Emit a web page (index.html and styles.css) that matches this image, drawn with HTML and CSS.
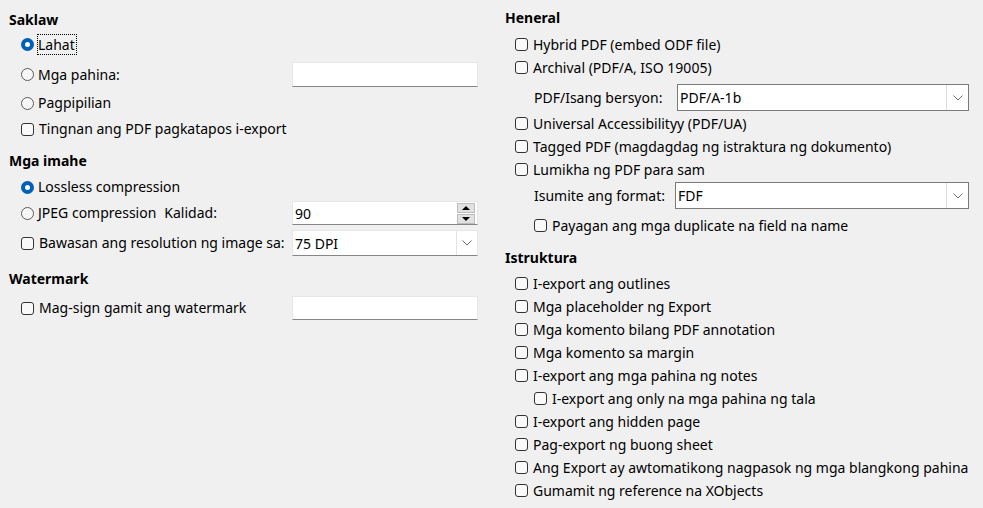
FILE: index.html
```html
<!DOCTYPE html>
<html>
<head>
<meta charset="utf-8">
<link rel="stylesheet" href="styles.css">
</head>
<body>
<div class="page">
  <div class="col left">
    <div class="heading h-saklaw">Saklaw</div>
    <div class="row r-lahat"><span class="radio on"></span><span class="lbl focus">Lahat</span></div>
    <div class="row r-pahina"><span class="radio"></span><span class="lbl grow">Mga pahina:</span><span class="field"></span></div>
    <div class="row r-pili"><span class="radio"></span><span class="lbl">Pagpipilian</span></div>
    <div class="row r-tingnan"><span class="check"></span><span class="lbl">Tingnan ang PDF pagkatapos i-export</span></div>

    <div class="heading h-imahe">Mga imahe</div>
    <div class="row r-lossless"><span class="radio on"></span><span class="lbl">Lossless compression</span></div>
    <div class="row r-jpeg"><span class="radio"></span><span class="lbl">JPEG compression</span><span class="lbl kalidad grow">Kalidad:</span>
      <span class="field spin"><span class="val">90</span><span class="spinbtns"><span class="sb up"></span><span class="sb down"></span></span></span>
    </div>
    <div class="row r-bawasan"><span class="check"></span><span class="lbl grow">Bawasan ang resolution ng image sa:</span>
      <span class="field combo"><span class="val">75 DPI</span><span class="drop"><svg width="10" height="6" viewBox="0 0 10 6"><path d="M0.5 0.5 L5 5 L9.5 0.5" fill="none" stroke="#707070" stroke-width="1"/></svg></span></span>
    </div>

    <div class="heading h-water">Watermark</div>
    <div class="row r-sign"><span class="check"></span><span class="lbl grow">Mag-sign gamit ang watermark</span><span class="field"></span></div>
  </div>

  <div class="col right">
    <div class="heading h-heneral">Heneral</div>
    <div class="row rr r-first"><span class="check"></span><span class="lbl">Hybrid PDF (embed ODF file)</span></div>
    <div class="row rr"><span class="check"></span><span class="lbl">Archival (PDF/A, ISO 19005)</span></div>
    <div class="row r-ver"><span class="lbl sub-lbl">PDF/Isang bersyon:</span>
      <span class="combo2 c-ver"><span class="val">PDF/A-1b</span><span class="drop2"><svg width="10" height="6" viewBox="0 0 10 6"><path d="M0.5 0.5 L5 5 L9.5 0.5" fill="none" stroke="#707070" stroke-width="1"/></svg></span></span>
    </div>
    <div class="row rr r-ua"><span class="check"></span><span class="lbl">Universal Accessibilityy (PDF/UA)</span></div>
    <div class="row rr"><span class="check"></span><span class="lbl">Tagged PDF (magdagdag ng istraktura ng dokumento)</span></div>
    <div class="row rr"><span class="check"></span><span class="lbl">Lumikha ng PDF para sam</span></div>
    <div class="row r-fmt"><span class="lbl sub-lbl">Isumite ang format:</span>
      <span class="combo2 c-fmt"><span class="val">FDF</span><span class="drop2"><svg width="10" height="6" viewBox="0 0 10 6"><path d="M0.5 0.5 L5 5 L9.5 0.5" fill="none" stroke="#707070" stroke-width="1"/></svg></span></span>
    </div>
    <div class="row rr r-payag indent"><span class="check"></span><span class="lbl">Payagan ang mga duplicate na field na name</span></div>

    <div class="heading h-istr">Istruktura</div>
    <div class="row rs r-sfirst"><span class="check"></span><span class="lbl">I-export ang outlines</span></div>
    <div class="row rs"><span class="check"></span><span class="lbl">Mga placeholder ng Export</span></div>
    <div class="row rs"><span class="check"></span><span class="lbl">Mga komento bilang PDF annotation</span></div>
    <div class="row rs"><span class="check"></span><span class="lbl">Mga komento sa margin</span></div>
    <div class="row rs"><span class="check"></span><span class="lbl">I-export ang mga pahina ng notes</span></div>
    <div class="row rs indent"><span class="check"></span><span class="lbl">I-export ang only na mga pahina ng tala</span></div>
    <div class="row rs"><span class="check"></span><span class="lbl">I-export ang hidden page</span></div>
    <div class="row rs"><span class="check"></span><span class="lbl">Pag-export ng buong sheet</span></div>
    <div class="row rs"><span class="check"></span><span class="lbl">Ang Export ay awtomatikong nagpasok ng mga blangkong pahina</span></div>
    <div class="row rs"><span class="check"></span><span class="lbl">Gumamit ng reference na XObjects</span></div>
  </div>
</div>
</body>
</html>
```

FILE: styles.css
```css
html, body {
  margin: 0;
  padding: 0;
  background: #f0f0f0;
}
body {
  font-family: "Noto Sans", "Open Sans", sans-serif;
  font-size: 14px;
  color: #000;
  width: 983px;
  height: 508px;
  overflow: hidden;
}
.page {
  display: grid;
  grid-template-columns: 496px 487px;
}
.col {
  display: flex;
  flex-direction: column;
}
.left {
  padding: 10px 0 0 9px;
  width: 469px;
}
.right {
  padding: 8px 0 0 9px;
}
.heading {
  font-weight: bold;
  height: 20px;
  line-height: 20px;
}
.row {
  display: flex;
  align-items: center;
  height: 24px;
}
.left .row {
  padding-left: 12px;
}
.lbl {
  white-space: nowrap;
  line-height: 18px;
}
.grow { flex: 1; }

.radio, .check {
  flex: none;
  width: 13px;
  height: 13px;
  box-sizing: border-box;
  margin-right: 4px;
}
.radio {
  border-radius: 50%;
  border: 1px solid #5c5c5c;
  background: #f7f7f7;
}
.radio.on {
  border: 4px solid #005fb8;
  background: #fff;
}
.check {
  border-radius: 3px;
  border: 1px solid #333;
  background: #f9f9f9;
  margin-right: 5px;
}
.focus {
  outline: 1px dotted #000;
  outline-offset: 0;
  padding: 0 1px 0 0;
  line-height: 19px;
}

/* left rows vertical positions */
.r-lahat { margin-top: 2px; }
.r-pahina { margin-top: 6px; height: 25px; }
.r-pili { margin-top: 4px; }
.r-tingnan { margin-top: 2px; }
.h-imahe { margin-top: 10px; }
.r-lossless { margin-top: 4px; }
.r-jpeg { margin-top: 2px; }
.r-bawasan { margin-top: 5px; height: 26px; }
.h-water { margin-top: 13px; }
.r-sign { margin-top: 7px; }

.kalidad { margin-left: 8px; }

.field {
  flex: none;
  width: 186px;
  height: 24px;
  box-sizing: border-box;
  background: #fff;
  border: 1px solid #e6e6e6;
  border-bottom: 1px solid #868686;
  display: flex;
  align-items: center;
}
.r-pahina .field { height: 25px; }
.field .val {
  flex: 1;
  padding-left: 2px;
}
.spin { padding-right: 2px; }
.spinbtns {
  display: flex;
  flex-direction: column;
  width: 18px;
  height: 21px;
  gap: 1px;
}
.sb {
  flex: 1;
  background: #e1e1e1;
  border: 1px solid #bdbdbd;
  position: relative;
}
.sb::after {
  content: "";
  position: absolute;
  left: 50%;
  top: 50%;
  transform: translate(-50%, -50%);
  border-left: 4px solid transparent;
  border-right: 4px solid transparent;
}
.sb.up::after { border-bottom: 4px solid #000; }
.sb.down::after { border-top: 4px solid #000; }

.combo { height: 26px; }
.drop {
  width: 20px;
  align-self: stretch;
  border-left: 1px solid #e3e3e3;
  display: flex;
  align-items: center;
  justify-content: center;
}

/* right column */
.rr { height: 23px; padding-left: 10px; }
.rs { height: 23px; padding-left: 10px; }
.indent { padding-left: 29px; }
.r-first { margin-top: 5px; }
.r-ver { height: 27px; margin-top: 5px; padding-left: 29px; }
.r-ua { margin-top: 1px; }
.r-fmt { height: 27px; margin-top: 1px; padding-left: 29px; }
.r-payag { margin-top: 5px; }
.h-istr { margin-top: 11px; }
.r-sfirst { margin-top: 4px; }

.sub-lbl { width: 143px; }
.combo2 {
  flex: none;
  width: 292px;
  height: 27px;
  box-sizing: border-box;
  background: #fff;
  border: 1px solid #7a7a7a;
  display: flex;
  align-items: center;
}
.c-fmt { width: 294px; margin-left: -2px; }
.combo2 .val { flex: 1; padding-left: 2px; }
.drop2 {
  width: 21px;
  align-self: stretch;
  border-left: 1px solid #dcdcdc;
  display: flex;
  align-items: center;
  justify-content: center;
}
```
